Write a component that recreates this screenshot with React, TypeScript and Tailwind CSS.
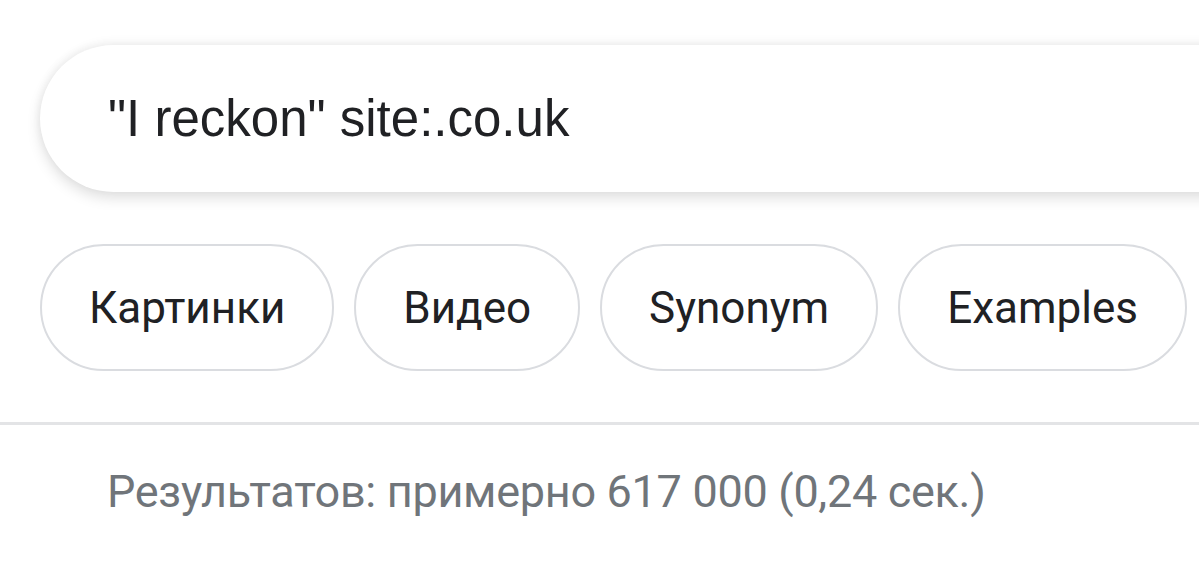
const chips = ["Картинки", "Видео", "Synonym", "Examples"];

export default function App() {
  return (
    <div className="w-[1199px] h-[566px] overflow-hidden bg-white">
      <div className="pt-[45px] pl-[40px]">
        <div className="h-[147px] w-[1300px] rounded-l-full bg-white shadow-[0_6px_14px_rgba(0,0,0,0.13),0_-3px_10px_rgba(0,0,0,0.05)] flex items-center pl-[68px]">
          <span
            className="text-[51px] text-[#202124] leading-none"
            style={{ fontFamily: "Arial, 'Liberation Sans', sans-serif" }}
          >
            "I reckon" site:.co.uk
          </span>
        </div>
      </div>

      <div className="flex gap-[20px] pl-[40px] pt-[52px] pb-[51px] whitespace-nowrap">
        {chips.map((c) => (
          <div
            key={c}
            className="h-[127px] px-[47px] flex items-center rounded-full border-2 border-[#dadce0] text-[44px] text-[#202124] shrink-0"
            style={{ fontFamily: "Roboto, 'Noto Sans', sans-serif" }}
          >
            {c}
          </div>
        ))}
      </div>

      <div className="h-[3px] bg-[#e3e4e6]" />

      <div
        className="pl-[107px] pt-[44px] text-[45px] leading-none tracking-[-0.3px] text-[#70757a]"
        style={{ fontFamily: "Roboto, 'Noto Sans', sans-serif" }}
      >
        Результатов: примерно 617 000 (0,24 сек.)
      </div>
    </div>
  );
}
